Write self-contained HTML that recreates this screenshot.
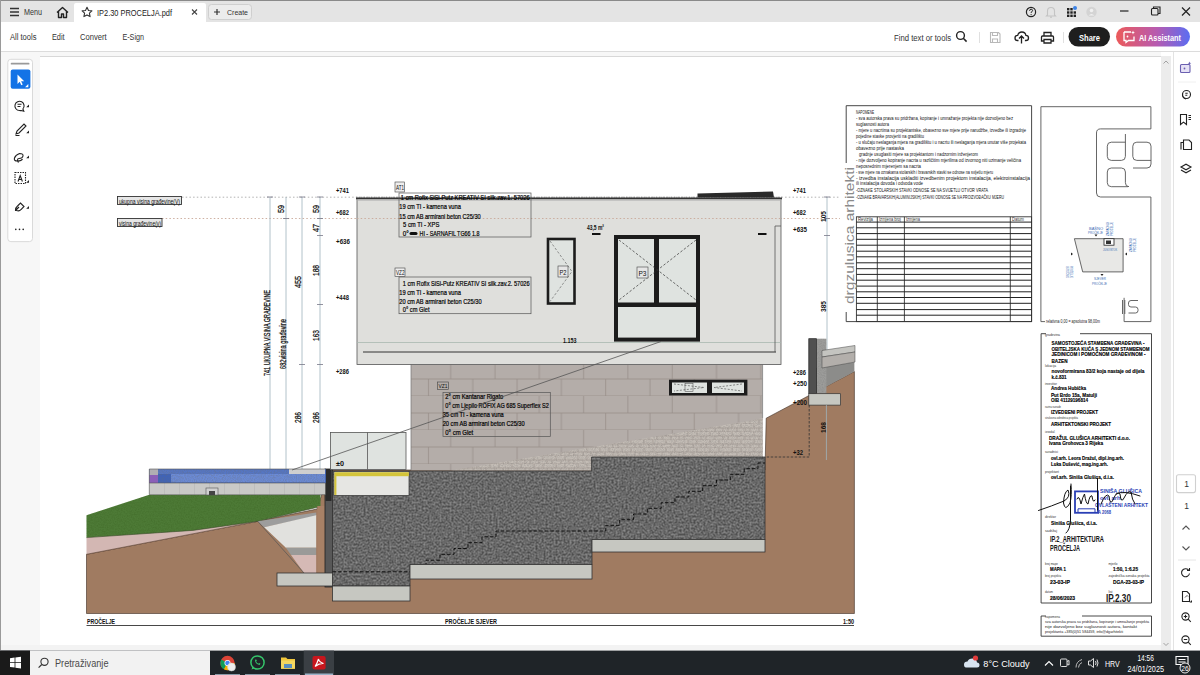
<!DOCTYPE html>
<html><head><meta charset="utf-8">
<style>
*{margin:0;padding:0;box-sizing:border-box}
html,body{width:1200px;height:675px;overflow:hidden;background:#f7f7f7;font-family:"Liberation Sans",sans-serif;color:#222}
.a{position:absolute}
.t{white-space:nowrap;line-height:1}
#tabbar{left:0;top:0;width:1200px;height:22px;background:#e4e4e4;border-top:1px solid #8a8a8a}
#toolbar{left:0;top:22px;width:1200px;height:30px;background:#fff;border-bottom:1px solid #dcdcdc}
#leftborder{left:0;top:0;width:1px;height:650px;background:#9a9a9a}
#page{left:40px;top:56px;width:1121px;height:590px;background:#fff;border-top:1px solid #d8d8d8;border-bottom:1px solid #dcdcdc}
#scroll{left:1161px;top:52px;width:10px;height:598px;background:#ececec}
#rpanel{left:1171px;top:52px;width:29px;height:598px;background:#fff;border-left:1px solid #e2e2e2}
#taskbar{left:0;top:650px;width:1200px;height:25px;background:#202020}
</style></head><body>
<div id="page" class="a"></div>
<div id="scroll" class="a"></div>
<div id="rpanel" class="a"></div>
<svg class="a" style="left:0;top:0" width="1200" height="675" font-family="Liberation Sans">
<defs>
 <filter id="noise" x="0" y="0" width="100%" height="100%" color-interpolation-filters="sRGB">
  <feTurbulence type="fractalNoise" baseFrequency="0.9" numOctaves="2" seed="3" result="n"/>
  <feColorMatrix in="n" type="matrix" values="0 0 0 0 0.42  0 0 0 0 0.42  0 0 0 0 0.42  1.6 0 0 0 -0.55" result="g"/>
  <feComposite in="g" in2="SourceGraphic" operator="in"/>
 </filter>
 <filter id="conc" x="0" y="0" width="100%" height="100%" color-interpolation-filters="sRGB">
  <feTurbulence type="fractalNoise" baseFrequency="0.5" numOctaves="2" seed="11" result="n"/>
  <feColorMatrix in="n" type="matrix" values="0.42 0 0 0 0.2  0.42 0 0 0 0.2  0.42 0 0 0 0.2  0 0 0 0 1" result="g"/>
  <feComposite in="g" in2="SourceGraphic" operator="in"/>
 </filter>
 <filter id="noiseL" x="0" y="0" width="100%" height="100%" color-interpolation-filters="sRGB">
  <feTurbulence type="fractalNoise" baseFrequency="0.7" numOctaves="2" seed="7" result="n"/>
  <feColorMatrix in="n" type="matrix" values="0 0 0 0 0.2  0 0 0 0 0.35  0 0 0 0 0.1  1.2 0 0 0 -0.45" result="g"/>
  <feComposite in="g" in2="SourceGraphic" operator="in"/>
 </filter>
 <pattern id="brick" patternUnits="userSpaceOnUse" x="411" y="362" width="88.6" height="34">
  <rect width="88.6" height="34" fill="#b4ada9"/>
  <path d="M0 17h88.6M0 34h88.6M39.7 0v17M84 0v17M17.5 17v17M61.8 17v17" stroke="#978f8a" stroke-width="0.8"/>
 </pattern>
 <pattern id="stone" patternUnits="userSpaceOnUse" width="22" height="8">
  <rect width="22" height="8" fill="#c4bdb6"/>
  <path d="M0 4h22M0 8h22M6 0v4M15 0v4M2 4v4M11 4v4M19 4v4" stroke="#a39b94" stroke-width="0.7"/>
 </pattern>
 <pattern id="poolstone" patternUnits="userSpaceOnUse" width="15" height="12" x="149" y="483">
  <rect width="15" height="12" fill="#c9c9c7"/>
  <path d="M0 0v12" stroke="#a9a9a7" stroke-width="0.7"/>
 </pattern>
</defs>

<!-- level reference dotted lines -->
<path d="M182 197.2H840" stroke="#a9a9a9" stroke-width="0.9" stroke-dasharray="1.5 2.2"/>
<path d="M162 218.5H840" stroke="#c8a898" stroke-width="0.9" stroke-dasharray="1.5 2.2"/>
<rect x="117.5" y="196.5" width="64" height="8" fill="#e6e6e6" stroke="#333" stroke-width="0.9"/>
<rect x="117.5" y="218.5" width="44.5" height="8" fill="#e6e6e6" stroke="#333" stroke-width="0.9"/>
<text x="119" y="203.6" font-size="6.4" fill="#111" textLength="61" lengthAdjust="spacingAndGlyphs">ukupna visina građevine(V)</text>
<text x="119" y="225.6" font-size="6.4" fill="#111" textLength="42" lengthAdjust="spacingAndGlyphs">visina građevine(v)</text>

<!-- vertical dimension lines -->
<g stroke="#9fb3bd" stroke-width="0.8">
 <path d="M270 197v273M286 197v273M302 197v273M320 197v273"/>
</g>
<g stroke="#778" stroke-width="0.8">
 <path d="M267 197h6M283 218.5h6M299 197h6M299 364.5h6M299 470h6M317 197h6M317 218.5h6M317 235.5h6M317 304.5h6M317 364.5h6M317 470h6"/>
</g>
<g fill="#111" font-size="8.5" font-weight="normal" stroke="#111" stroke-width="0.25">
 <text transform="translate(269.5,376) rotate(-90)" textLength="86" lengthAdjust="spacingAndGlyphs">741 UKUPNA VISINA GRAĐEVINE</text>
 <text transform="translate(285.5,369) rotate(-90)" textLength="50" lengthAdjust="spacingAndGlyphs">682visina građevine</text>
 <text transform="translate(300.5,288) rotate(-90)" textLength="12" lengthAdjust="spacingAndGlyphs">455</text>
 <text transform="translate(284,213) rotate(-90)" textLength="8" lengthAdjust="spacingAndGlyphs">59</text>
 <text transform="translate(318.5,213) rotate(-90)" textLength="8" lengthAdjust="spacingAndGlyphs">59</text>
 <text transform="translate(318.5,232) rotate(-90)" textLength="8" lengthAdjust="spacingAndGlyphs">47</text>
 <text transform="translate(318.5,276) rotate(-90)" textLength="11" lengthAdjust="spacingAndGlyphs">188</text>
 <text transform="translate(318.5,341) rotate(-90)" textLength="11" lengthAdjust="spacingAndGlyphs">163</text>
 <text transform="translate(300.5,423) rotate(-90)" textLength="11" lengthAdjust="spacingAndGlyphs">286</text>
 <text transform="translate(318.5,423) rotate(-90)" textLength="11" lengthAdjust="spacingAndGlyphs">286</text>
</g>


<!-- BROWN GROUND -->
<path d="M86.5 554.3L257.7 521.3L317 509L330 470H765L766.2 418.2L854.4 371.5V613.5H86.5Z" fill="#a07b61" stroke="#3a2a20" stroke-width="0.6"/>
<!-- pink strip -->
<path d="M86.5 537.6L257.7 521.3L86.5 554.3Z" fill="#d3b7b3"/>
<path d="M86.5 554.3L257.7 521.3" stroke="#6d5040" stroke-width="0.7"/>
<!-- grass -->
<path d="M86.5 515.3L149.3 494.7L320.5 494.7V506.6L257.7 521.3L192.7 530.4L86.5 537.6Z" fill="#4d7a36"/>
<path d="M86.5 515.3L149.3 494.7L320.5 494.7V506.6L257.7 521.3L192.7 530.4L86.5 537.6Z" fill="#000" filter="url(#noiseL)" opacity=".5"/>
<path d="M86.5 537.6L192.7 530.4L257.7 521.3L320.5 506.6" stroke="#3b4a2a" stroke-width="0.6" fill="none"/>
<!-- gravel wedge -->
<path d="M257.7 521.3L316.2 512.6V516L264.2 527.2Z" fill="#9d9d9d"/>
<path d="M264.2 527.2L316.2 515.3V547.8H285.9Z" fill="#e1e1de"/>
<path d="M285.9 547.8H316.2V555H291Z" fill="#9a9a98"/>
<path d="M291 555H316.2V573H304Z" fill="#d5b9b5"/>
<path d="M257.7 521.3L304 573" stroke="#555" stroke-width="0.7"/>
<rect x="317.3" y="506" width="7.6" height="67" fill="#a88166"/>
<!-- dark wall -->
<rect x="325" y="469" width="7.5" height="118" fill="#585858" stroke="#222" stroke-width="0.8"/>
<rect x="325.5" y="469" width="6" height="32" fill="#2a2a2a"/>

<!-- pool -->
<rect x="149.3" y="469" width="176.7" height="14" fill="#3f63b8"/>
<rect x="158" y="469" width="167" height="5" fill="#5576c4"/>
<rect x="171" y="474" width="154" height="8.5" fill="#6a8ad6"/>
<rect x="149.3" y="469" width="176.7" height="14" fill="#000" filter="url(#noise)" opacity=".45"/>
<rect x="149.3" y="469" width="8.7" height="14" fill="#b0aeb3"/>
<rect x="149.3" y="475" width="8.7" height="8" fill="#8b5fb8"/>
<rect x="289" y="469" width="36" height="5" fill="#cfcfcf"/>
<rect x="149.3" y="483" width="176" height="11.7" fill="url(#poolstone)"/>
<path d="M149.3 469H326M149.3 483H326M149.3 494.7H326M149.3 469V494.7" stroke="#555" stroke-width="0.6" fill="none"/>
<rect x="206" y="488" width="12" height="7" fill="#d0d0d0" stroke="#555" stroke-width="0.6"/>
<rect x="209" y="491" width="6" height="4" fill="#444"/>

<!-- BRICK WALL -->
<rect x="411" y="364.5" width="351.6" height="106" fill="url(#brick)"/>
<path d="M450.7 470.6L754.6 420L762.6 418V457H591.6V470.6Z" fill="url(#stone)"/>
<path d="M450.7 470.6L754.6 420L762.6 418V457H591.6V470.6Z" fill="#000" filter="url(#noise)" opacity=".35"/>
<path d="M411 364.5V470.6M762.6 364.5V418" stroke="#777" stroke-width="0.7"/>
<!-- P4 -->
<rect x="669" y="379.7" width="78.4" height="15.8" fill="#1c1c1c"/>
<rect x="672" y="382.5" width="35" height="10.5" fill="#dfe3e0"/>
<rect x="712" y="382.5" width="32" height="10.5" fill="#dfe3e0"/>
<path d="M674 384l30 3.5-30 3.5M742 384l-28 3.5 28 3.5" stroke="#444" stroke-width="0.6" stroke-dasharray="2 1.5" fill="none"/>
<rect x="685" y="383.5" width="8" height="8" fill="none" stroke="#444" stroke-width="0.5"/>
<!-- VZ1 -->
<rect x="437.5" y="382" width="11" height="7.5" fill="#b4ada9" stroke="#444" stroke-width="0.6"/>
<text x="438.5" y="388.2" font-size="6" fill="#111" textLength="9" lengthAdjust="spacingAndGlyphs">VZ1</text>
<rect x="443" y="392.4" width="107.3" height="44.2" fill="none" stroke="#555" stroke-width="0.7"/>
<g font-size="7" fill="#000" stroke="#000" stroke-width="0.2">
 <text x="445.3" y="399.4" textLength="58" lengthAdjust="spacingAndGlyphs">2° cm  Kantanar Rigato</text>
 <text x="445.3" y="408.3" textLength="103.5" lengthAdjust="spacingAndGlyphs">0° cm  Ljepilo RÖFIX AG 685 Superflex S2</text>
 <text x="442.7" y="417.1" textLength="61" lengthAdjust="spacingAndGlyphs">35  cm  TI - kamena vuna</text>
 <text x="442.7" y="425.7" textLength="82" lengthAdjust="spacingAndGlyphs">20  cm  AB armirani beton C25/30</text>
 <text x="445.3" y="435.2" textLength="28" lengthAdjust="spacingAndGlyphs">0° cm  Glet</text>
</g>

<!-- CONCRETE -->
<path d="M332.5 471H591.6V457H765V539.5H592V564.5H410V586H332.5Z" fill="#6a6a6a" filter="url(#conc)"/>
<path d="M332.5 471H591.6V457H765V539.5H592V564.5H410V586H332.5Z" fill="none" stroke="#333" stroke-width="0.8"/>
<path d="M332.5 571.8H412V566H426.0V560.2H440.0V554.3H454.0V548.5H468.0V542.7H482.0V536.8H496.0V531.0H592H605.8V525.3H619.7V519.7H633.5V514.0H647.3V508.3H661.2V502.7H675.0V497.0H688.8V491.3H702.7V485.7H716.5V480.0H730.3V474.3H744.2V468.7H758.0V463.0H765" stroke="#111" stroke-width="1" stroke-dasharray="3.5 2" fill="none"/>
<!-- footings -->
<g fill="#c6c7c1" stroke="#333" stroke-width="0.8">
 <rect x="277" y="573" width="55.5" height="13"/>
 <rect x="332.5" y="586" width="77.5" height="15"/>
 <rect x="410" y="564.5" width="182" height="14.5"/>
 <rect x="592" y="539.5" width="173" height="12.5"/>
</g>
<!-- glass railing / terrace -->
<rect x="334" y="471.5" width="75" height="24" fill="#e6e6e3" stroke="#333" stroke-width="0.7"/>
<rect x="334.4" y="472.2" width="74.5" height="4" fill="#d4c43a"/>
<rect x="334.4" y="476" width="2" height="19" fill="#d4c43a"/>
<rect x="330.5" y="432.5" width="75.5" height="37" fill="#dfe3e0" stroke="#555" stroke-width="0.8"/>
<path d="M367.5 432.5v37" stroke="#555" stroke-width="0.8"/>

<!-- UPPER HOUSE -->
<rect x="357" y="198" width="424" height="166.5" fill="#dfdfdc" stroke="#555" stroke-width="0.8"/>
<path d="M356 198.5H782" stroke="#333" stroke-width="1.6"/>
<path d="M357 200H781" stroke="#aaa" stroke-width="1"/>
<path d="M356 197.3H782" stroke="#666" stroke-width="0.8" stroke-dasharray="1.5 1"/>
<path d="M697.5 193.5L773 191.5L774 197.5H697.5Z" fill="#2a2a2a"/>
<path d="M357 342.5H781" stroke="#a8b8b0" stroke-width="0.8"/>
<path d="M363 352H776" stroke="#333" stroke-width="1"/>
<path d="M775 352V226h6" stroke="#555" stroke-width="0.8" fill="none"/>
<path d="M357 218.5H781" stroke="#c8a898" stroke-width="0.9" stroke-dasharray="1.5 2.2"/>
<!-- AT1 -->
<rect x="395" y="182" width="9.6" height="10" fill="#eee" stroke="#444" stroke-width="0.6"/>
<text x="396" y="190" font-size="7" fill="#111" textLength="8" lengthAdjust="spacingAndGlyphs">AT1</text>
<rect x="399" y="193" width="132" height="44" fill="none" stroke="#555" stroke-width="0.7"/>
<g font-size="7" fill="#000" stroke="#000" stroke-width="0.2">
 <text x="400.7" y="199.8" textLength="129" lengthAdjust="spacingAndGlyphs">1  cm  Rofix SiSi-Putz KREATIV SI silk.zav.1.  57026</text>
 <text x="399.3" y="208.7" textLength="61.6" lengthAdjust="spacingAndGlyphs">19  cm  TI - kamena vuna</text>
 <text x="399.3" y="218.5" textLength="81.4" lengthAdjust="spacingAndGlyphs">15  cm  AB armirani beton C25/30</text>
 <text x="403" y="227.4" textLength="36.3" lengthAdjust="spacingAndGlyphs">5  cm  TI - XPS</text>
 <text x="402.8" y="236.3" textLength="6" lengthAdjust="spacingAndGlyphs">0°</text>
 <text x="419.5" y="236.3" textLength="60" lengthAdjust="spacingAndGlyphs">HI - SARNAFIL TG66 1.8</text>
</g>
<rect x="409.5" y="232" width="8" height="3" rx="1.5" fill="#111"/>
<!-- VZ2 -->
<rect x="395" y="268" width="10" height="8.5" fill="#eee" stroke="#444" stroke-width="0.6"/>
<text x="396" y="275.2" font-size="6.5" fill="#111" textLength="8.5" lengthAdjust="spacingAndGlyphs">VZ2</text>
<rect x="399" y="277" width="132" height="36.7" fill="none" stroke="#555" stroke-width="0.7"/>
<g font-size="7" fill="#000" stroke="#000" stroke-width="0.2">
 <text x="402.8" y="285.7" textLength="126.8" lengthAdjust="spacingAndGlyphs">1  cm  Rofix SiSi-Putz KREATIV SI silk.zav.2.  57026</text>
 <text x="399.3" y="295.2" textLength="61.6" lengthAdjust="spacingAndGlyphs">19  cm  TI - kamena vuna</text>
 <text x="399.3" y="303.5" textLength="82.3" lengthAdjust="spacingAndGlyphs">20  cm  AB armirani beton C25/30</text>
 <text x="402.8" y="312.4" textLength="26.7" lengthAdjust="spacingAndGlyphs">0° cm  Glet</text>
</g>
<!-- P2 -->
<rect x="548" y="239" width="26.5" height="64.5" fill="#dfe3e0" stroke="#1c1c1c" stroke-width="2.6"/>
<path d="M550 241L572 271.5L550 301.5" stroke="#555" stroke-width="0.6" stroke-dasharray="2.5 1.8" fill="none"/>
<rect x="558" y="266" width="10" height="11" fill="#e6e6e6" stroke="#444" stroke-width="0.6"/>
<text x="559.5" y="274.5" font-size="7" fill="#111" textLength="7" lengthAdjust="spacingAndGlyphs">P2</text>
<!-- P3 -->
<rect x="616" y="237" width="82" height="102.6" fill="#dfe3e0" stroke="#1c1c1c" stroke-width="4"/>
<rect x="654" y="237" width="5" height="67" fill="#1c1c1c"/>
<rect x="616" y="302.5" width="82" height="4.5" fill="#1c1c1c"/>
<path d="M619 240L696 300M696 240L619 300" stroke="#333" stroke-width="0.7" stroke-dasharray="2.5 1.8" fill="none"/>
<rect x="637" y="267" width="11" height="11" fill="#e6e6e6" stroke="#444" stroke-width="0.6"/>
<text x="638.5" y="275.5" font-size="7" fill="#111" textLength="8" lengthAdjust="spacingAndGlyphs">P3</text>
<text x="587" y="230" font-size="7.5" font-weight="bold" fill="#111" textLength="17" lengthAdjust="spacingAndGlyphs">43,5 m²</text>
<rect x="592" y="233" width="8.5" height="2" fill="#111"/>
<rect x="758" y="233" width="8.5" height="2" fill="#111"/>
<text x="563" y="343" font-size="7.5" font-weight="bold" fill="#111" textLength="13.5" lengthAdjust="spacingAndGlyphs">1.153</text>
<!-- long diagonal line -->
<path d="M292 470L661 341.5" stroke="#555" stroke-width="0.8"/>

<!-- RIGHT DIMENSIONS -->
<path d="M827 197v165" stroke="#9fb3bd" stroke-width="0.8"/>
<path d="M824 197h6M824 218.5h6M824 235.5h6" stroke="#778" stroke-width="0.8"/>
<g fill="#111" font-size="7.5" font-weight="bold">
 <text x="793" y="193" textLength="13" lengthAdjust="spacingAndGlyphs">+741</text>
 <text x="793" y="215" textLength="13" lengthAdjust="spacingAndGlyphs">+682</text>
 <text x="793" y="232" textLength="14" lengthAdjust="spacingAndGlyphs">+635</text>
 <text x="793" y="375" textLength="13" lengthAdjust="spacingAndGlyphs">+286</text>
 <text x="793" y="386" textLength="14" lengthAdjust="spacingAndGlyphs">+250</text>
 <text x="793" y="405" textLength="14" lengthAdjust="spacingAndGlyphs">+200</text>
 <text x="793" y="454.5" textLength="10" lengthAdjust="spacingAndGlyphs">+32</text>
</g>
<g fill="#111" font-size="7" font-weight="bold">
 <text transform="translate(826,222) rotate(-90)" textLength="11" lengthAdjust="spacingAndGlyphs">105</text>
 <text transform="translate(826,312) rotate(-90)" textLength="11" lengthAdjust="spacingAndGlyphs">385</text>
 <text transform="translate(826,433) rotate(-90)" textLength="11" lengthAdjust="spacingAndGlyphs">168</text>
</g>
<!-- right retaining structure -->
<path d="M816 368L854.4 362V371.5L816 392Z" fill="#8c8c8a"/>
<rect x="816.4" y="338.7" width="10" height="55" fill="#9c9c9a"/>
<rect x="816.4" y="338.7" width="10" height="55" fill="#000" filter="url(#noise)" opacity=".3"/>
<path d="M822 350.5L855 345.5V352L822 357Z" fill="#c4c4c0" stroke="#444" stroke-width="0.5"/>
<path d="M822 357L855 352V362L822 368Z" fill="#b3afab" stroke="#444" stroke-width="0.5"/>
<rect x="808.8" y="338.7" width="7.6" height="55" fill="#505050" stroke="#222" stroke-width="0.7"/>
<rect x="808.8" y="393.7" width="31.7" height="11.4" fill="#c6c7c1" stroke="#333" stroke-width="0.7"/>
<path d="M809.2 405V457H765" stroke="#333" stroke-width="0.8" stroke-dasharray="2.5 1.5" fill="none"/>
<path d="M826.4 405V460" stroke="#9fb3bd" stroke-width="0.8"/>
<!-- captions -->
<path d="M86.5 625.5H854" stroke="#333" stroke-width="0.9"/>
<g fill="#111" font-size="7" font-weight="bold">
 <text x="87" y="623.5" textLength="28" lengthAdjust="spacingAndGlyphs">PROČELJE</text>
 <text x="445" y="623.5" textLength="52" lengthAdjust="spacingAndGlyphs">PROČELJE SJEVER</text>
 <text x="843" y="623.5" textLength="11" lengthAdjust="spacingAndGlyphs">1:50</text>
</g>
<g fill="#111" font-size="7.5" font-weight="bold">
 <text x="336" y="193" textLength="13" lengthAdjust="spacingAndGlyphs">+741</text>
 <text x="336" y="215" textLength="13" lengthAdjust="spacingAndGlyphs">+682</text>
 <text x="336" y="244" textLength="14" lengthAdjust="spacingAndGlyphs">+636</text>
 <text x="336" y="300" textLength="13" lengthAdjust="spacingAndGlyphs">+448</text>
 <text x="336" y="374" textLength="13" lengthAdjust="spacingAndGlyphs">+286</text>
 <text x="336" y="466" textLength="8" lengthAdjust="spacingAndGlyphs">±0</text>
</g>
</svg>
<svg class="a" style="left:0;top:0" width="1200" height="675" font-family="Liberation Sans">
<!-- NOTES BOX -->
<g stroke="#333" stroke-width="0.9" fill="none">
 <path d="M846.2 163V105.7H1031.6V321.6H846.2V312"/>
 <rect x="856.4" y="216.8" width="175.2" height="104.8"/>
 <path d="M877.3 216.8V321.6M904.4 216.8V321.6M1010.3 216.8V321.6"/>
</g>
<g stroke="#222" stroke-width="1">
 <path d="M856.4 222.1H1031.6M856.4 227.8H1031.6M856.4 233.6H1031.6M856.4 239.3H1031.6M856.4 245.2H1031.6M856.4 251.2H1031.6M856.4 256.8H1031.6M856.4 262.8H1031.6M856.4 268.7H1031.6M856.4 274.4H1031.6M856.4 280.2H1031.6M856.4 286.1H1031.6M856.4 291.8H1031.6M856.4 297.5H1031.6M856.4 303.3H1031.6M856.4 309.6H1031.6M856.4 315.2H1031.6"/>
</g>
<g font-size="5" fill="#333">
 <text x="858" y="221" textLength="15" lengthAdjust="spacingAndGlyphs">Revizija</text>
 <text x="879" y="221" textLength="22" lengthAdjust="spacingAndGlyphs">Izmjena broj</text>
 <text x="906" y="221" textLength="14" lengthAdjust="spacingAndGlyphs">Izmjena</text>
 <text x="1012" y="221" textLength="12" lengthAdjust="spacingAndGlyphs">Datum</text>
</g>
<text transform="translate(853.5,304) rotate(-90) scale(1,1.25)" font-size="10" fill="#8a8a8a" textLength="137" lengthAdjust="spacingAndGlyphs">drgzulusica arhitekti</text>
<g font-size="4.6" fill="#111">
 <text x="856" y="114" textLength="18" lengthAdjust="spacingAndGlyphs">NAPOMENE</text>
 <text x="856" y="120" textLength="157" lengthAdjust="spacingAndGlyphs">- sva autorska prava su pridržana, kopiranje i umnažanje projekta nije dozvoljeno bez</text>
 <text x="856" y="125.8" textLength="33" lengthAdjust="spacingAndGlyphs">suglasnosti autora</text>
 <text x="856" y="132" textLength="170" lengthAdjust="spacingAndGlyphs">- mjere u nacrtima su projektantske, obavezno sve mjere prije narudžbe, izvedbe ili izgradnje</text>
 <text x="856" y="137.8" textLength="68" lengthAdjust="spacingAndGlyphs">pojedine stavke provjeriti na gradilištu</text>
 <text x="856" y="144" textLength="170" lengthAdjust="spacingAndGlyphs">- u slučaju neslaganja mjera na gradilištu i u nacrtu ili neslaganja mjera unutar više projekata</text>
 <text x="856" y="149.8" textLength="48" lengthAdjust="spacingAndGlyphs">obavezno prije nastavka</text>
 <text x="859" y="155.6" textLength="119" lengthAdjust="spacingAndGlyphs">gradnje usuglasiti mjere sa projektantom i nadzornim inženjerom</text>
 <text x="856" y="161.5" textLength="165" lengthAdjust="spacingAndGlyphs">- nije dozvoljeno kopiranje nacrta u različitim mjerilima od izvornog niti uzimanje veličina</text>
 <text x="856" y="167.5" textLength="65" lengthAdjust="spacingAndGlyphs">neposrednim mjerenjem sa nacrta</text>
 <text x="856" y="173.5" textLength="137" lengthAdjust="spacingAndGlyphs">- sve mjere na oznakama stolarskih i bravarskih stavki se odnose na svijetlu mjeru</text>
 <text x="856" y="179.5" textLength="174" lengthAdjust="spacingAndGlyphs">- izvedba instalacija uskladiti izvedbenim projektom instalacija, elektroinstalacija</text>
 <text x="856" y="185.3" textLength="67" lengthAdjust="spacingAndGlyphs">ili instalacija dovoda i odvoda vode</text>
 <text x="856" y="192" textLength="132" lengthAdjust="spacingAndGlyphs">-OZNAKE STOLARSKIH STAVKI ODNOSE SE NA SVIJETLU OTVOR VRATA</text>
 <text x="856" y="199" textLength="148" lengthAdjust="spacingAndGlyphs">-OZNAKE BRAVARSKIH(ALUMINIJSKIH) STAVKI ODNOSE SE NA PROIZVOĐAČKU MJERU</text>
</g>

<!-- LOGO BOX -->
<g stroke="#555" stroke-width="0.9" fill="none">
 <path d="M1040.9 321.6V106.7H1150.9V128.9H1100.5Q1096.5 128.9 1096.5 133V193Q1096.5 197 1100.5 197H1150.9V321.6H1124.1V297.8"/>
 <path d="M1040.9 321.6H1045"/>
 <!-- d -->
 <path d="M1125.4 134V156.4Q1125.4 160.4 1121.4 160.4H1111.3Q1107.3 160.4 1107.3 156.4V146.2Q1107.3 142.2 1111.3 142.2H1125.4"/>
 <!-- g -->
 <path d="M1151 160.4H1136.8Q1132.8 160.4 1132.8 156.4V146.2Q1132.8 142.2 1136.8 142.2H1147Q1151 142.2 1151 146.2V164Q1151 168 1147 168H1133"/>
 <!-- a -->
 <path d="M1128 186.7H1111.3Q1107.3 186.7 1107.3 182.7V172Q1107.3 168 1111.3 168H1121.4Q1125.4 168 1125.4 172V182.7Q1125.4 186.7 1129 186.7"/>
 <!-- S mark -->
 <path d="M1122.5 300V314M1124.8 300V314"/>
 <path d="M1138 300.5H1131Q1128.5 300.5 1128.5 303V304.5Q1128.5 307 1131 307H1135.5Q1138 307 1138 309.5V310.5Q1138 313 1135.5 313H1128.5"/>
</g>
<text x="1046" y="322.5" font-size="4.6" fill="#222" textLength="54" lengthAdjust="spacingAndGlyphs">relativna 0,00 = apsolutna 98,00m</text>
<!-- site plan -->
<path d="M1074.4 238.7H1123.1V271.9H1082.7Z" fill="#e8e8e6" stroke="#444" stroke-width="0.8"/>
<rect x="1104" y="238.7" width="10" height="6.5" fill="#fff" stroke="#222" stroke-width="0.8"/>
<rect x="1106" y="240.5" width="5" height="3.5" fill="#333"/>
<g fill="#3b6cb3" font-size="4">
 <text x="1089" y="229.5" textLength="14" lengthAdjust="spacingAndGlyphs">BAŠNO</text>
 <text x="1088" y="234" textLength="15" lengthAdjust="spacingAndGlyphs">PROČELJE</text>
 <text x="1103" y="251" textLength="14" lengthAdjust="spacingAndGlyphs">JUGOISTOK</text>
 <text transform="translate(1109,236) rotate(-90)" textLength="14" lengthAdjust="spacingAndGlyphs">ZAPADNO</text>
 <text transform="translate(1113,236) rotate(-90)" textLength="14" lengthAdjust="spacingAndGlyphs">PROČELJE</text>
 <text transform="translate(1066,266) rotate(90)" textLength="12" lengthAdjust="spacingAndGlyphs">ISTOČNO</text>
 <text transform="translate(1070,266) rotate(90)" textLength="12" lengthAdjust="spacingAndGlyphs">PROČELJE</text>
 <text transform="translate(1132,252) rotate(-90)" textLength="14" lengthAdjust="spacingAndGlyphs">ZAPADNO</text>
 <text transform="translate(1136,252) rotate(-90)" textLength="14" lengthAdjust="spacingAndGlyphs">PROČELJE</text>
 <text x="1094" y="280" textLength="12" lengthAdjust="spacingAndGlyphs">SJEVER</text>
 <text x="1092" y="284.5" textLength="15" lengthAdjust="spacingAndGlyphs">PROČELJE</text>
</g>
<g fill="#222"><path d="M1094.5 234.5h3l-1.5 2z M1102 276l-1.5-2h3z M1071 255.5v-3l2 1.5z M1127 252.5v3l-2-1.5z"/></g>

<!-- TITLE BLOCK -->
<g stroke="#333" stroke-width="0.9" fill="none">
 <path d="M1046 333.7H1041.1V603H1151.5V333.7H1080"/>
 <path d="M1041.1 616H1046M1082 616H1151.5V636.2H1041.1V616"/>
</g>
<g font-size="4.3" fill="#333">
 <text x="1045" y="335.5" textLength="15" lengthAdjust="spacingAndGlyphs">građevina</text>
 <text x="1045" y="366.5" textLength="11" lengthAdjust="spacingAndGlyphs">lokacija</text>
 <text x="1045" y="384.5" textLength="12" lengthAdjust="spacingAndGlyphs">investitor</text>
 <text x="1045" y="408" textLength="16" lengthAdjust="spacingAndGlyphs">razina razrade</text>
 <text x="1045" y="419.3" textLength="33" lengthAdjust="spacingAndGlyphs">strukovna odrednica projekta</text>
 <text x="1045" y="433" textLength="10" lengthAdjust="spacingAndGlyphs">izvođač</text>
 <text x="1045" y="452.5" textLength="13" lengthAdjust="spacingAndGlyphs">suradnici</text>
 <text x="1045" y="472.5" textLength="14" lengthAdjust="spacingAndGlyphs">projektant</text>
 <text x="1045" y="518" textLength="11" lengthAdjust="spacingAndGlyphs">direktor</text>
 <text x="1045" y="532" textLength="12" lengthAdjust="spacingAndGlyphs">sadržaj</text>
 <text x="1045" y="564.5" textLength="13" lengthAdjust="spacingAndGlyphs">broj mape</text>
 <text x="1108.5" y="564.5" textLength="9" lengthAdjust="spacingAndGlyphs">mjerilo</text>
 <text x="1045" y="577" textLength="16" lengthAdjust="spacingAndGlyphs">broj projekta</text>
 <text x="1108.5" y="577" textLength="41" lengthAdjust="spacingAndGlyphs">zajednička oznaka projekta</text>
 <text x="1045" y="592.5" textLength="8" lengthAdjust="spacingAndGlyphs">datum</text>
 <text x="1108.5" y="592.5" textLength="4" lengthAdjust="spacingAndGlyphs">list</text>
 <text x="1045" y="617.5" textLength="15" lengthAdjust="spacingAndGlyphs">napomena</text>
</g>
<g font-size="6" font-weight="bold" fill="#000" stroke="#000" stroke-width="0.15">
 <text x="1051.5" y="344.8" textLength="93" lengthAdjust="spacingAndGlyphs">SAMOSTOJEĆA STAMBENA GRAĐEVINA -</text>
 <text x="1051.5" y="350.8" textLength="98" lengthAdjust="spacingAndGlyphs">OBITELJSKA KUĆA S JEDNOM STAMBENOM</text>
 <text x="1051.5" y="356.4" textLength="94" lengthAdjust="spacingAndGlyphs">JEDINICOM I POMOĆNOM GRAĐEVINOM -</text>
 <text x="1051.5" y="362.8" textLength="16" lengthAdjust="spacingAndGlyphs">BAZEN</text>
 <text x="1051.5" y="373.2" textLength="93" lengthAdjust="spacingAndGlyphs">novoformirana 83/2  koja nastaje od dijela</text>
 <text x="1051.5" y="378.8" textLength="15" lengthAdjust="spacingAndGlyphs">k.č.831</text>
 <text x="1051" y="390.2" textLength="35" lengthAdjust="spacingAndGlyphs">Andrea Hubička</text>
 <text x="1051" y="396.6" textLength="46" lengthAdjust="spacingAndGlyphs">Put Brdo 15a, Matulji</text>
 <text x="1051" y="402.2" textLength="37" lengthAdjust="spacingAndGlyphs">OIB 41129196814</text>
 <text x="1051" y="414" textLength="47" lengthAdjust="spacingAndGlyphs">IZVEDBENI PROJEKT</text>
 <text x="1051" y="425.5" textLength="60" lengthAdjust="spacingAndGlyphs">ARHITEKTONSKI PROJEKT</text>
 <text x="1049" y="439.7" textLength="81" lengthAdjust="spacingAndGlyphs">DRAŽUL GLUŠICA ARHITEKTI d.o.o.</text>
 <text x="1049" y="444.8" textLength="54" lengthAdjust="spacingAndGlyphs">Ivana Grohovca 3 Rijeka</text>
 <text x="1051" y="459.7" textLength="73" lengthAdjust="spacingAndGlyphs">ovl.arh. Leora Dražul, dipl.ing.arh.</text>
 <text x="1051" y="465.5" textLength="57" lengthAdjust="spacingAndGlyphs">Luka Dušević, mag.ing.arh.</text>
 <text x="1051" y="479.2" textLength="63" lengthAdjust="spacingAndGlyphs">ovl.arh. Siniša Glušica, d.i.a.</text>
 <text x="1051" y="525" textLength="46" lengthAdjust="spacingAndGlyphs">Siniša Glušica, d.i.a.</text>
 <text x="1050" y="571.2" textLength="16" lengthAdjust="spacingAndGlyphs">MAPA 1</text>
 <text x="1113" y="571.2" textLength="25" lengthAdjust="spacingAndGlyphs">1:50, 1:6.25</text>
 <text x="1050" y="583.8" textLength="20" lengthAdjust="spacingAndGlyphs">23-03-IP</text>
 <text x="1113" y="583.8" textLength="31" lengthAdjust="spacingAndGlyphs">DGA-23-03-IP</text>
 <text x="1050" y="600.2" textLength="25" lengthAdjust="spacingAndGlyphs">28/06/2023</text>
</g>
<g font-weight="bold" fill="#1a1a1a">
 <text x="1050" y="542.3" font-size="8.5" textLength="54" lengthAdjust="spacingAndGlyphs">IP.2_ARHITEKTURA</text>
 <text x="1050" y="551.3" font-size="8.5" textLength="30" lengthAdjust="spacingAndGlyphs">PROČELJA</text>
 <text x="1106" y="601.5" font-size="10" textLength="25" lengthAdjust="spacingAndGlyphs">IP.2.30</text>
</g>
<g font-size="4.4" fill="#222">
 <text x="1045" y="622.5" textLength="104" lengthAdjust="spacingAndGlyphs">sva autorska prava su pridržana, kopiranje i umnažanje projekta</text>
 <text x="1045" y="627.5" textLength="92" lengthAdjust="spacingAndGlyphs">nije dozvoljeno bez suglasnosti autora, kontakt</text>
 <text x="1045" y="632.5" textLength="78" lengthAdjust="spacingAndGlyphs">projektanta +385(0)51 584459, info@dgarhitekti</text>
</g>
<!-- stamp & signature -->
<rect x="1075" y="491.4" width="23" height="21.4" fill="none" stroke="#2a3fb5" stroke-width="1.8"/>
<path d="M1078 512.8v-4h17v4" stroke="#2a3fb5" stroke-width="1" fill="none"/>
<g fill="#2a3fb5" font-weight="bold" font-size="5.5">
 <text x="1100" y="493" textLength="42" lengthAdjust="spacingAndGlyphs">SINIŠA GLUŠICA</text>
 <text x="1100" y="500" textLength="22" lengthAdjust="spacingAndGlyphs">ovl. arh.</text>
 <text x="1095" y="507" textLength="53" lengthAdjust="spacingAndGlyphs">OVLAŠTENI ARHITEKT</text>
 <text x="1098" y="513.5" textLength="13" lengthAdjust="spacingAndGlyphs">A 2068</text>
</g>
<g stroke="#111" stroke-width="1" fill="none" stroke-linecap="round">
 <path d="M1038.5 510.5Q1052 506 1064 501Q1071 497 1068 490Q1064 492 1063.5 503Q1065 512 1070 503Q1072 496 1071 484"/>
 <path d="M1070.5 486V520Q1070 530 1066 533"/>
 <path d="M1077 499Q1079 494 1081 504Q1083 496 1084.5 494Q1086 504 1088 504Q1090 494 1092 496Q1093 504 1095 500"/>
 <path d="M1097.5 478V510"/>
 <path d="M1101 504Q1106 492 1109 496Q1110 506 1113 500Q1117 490 1120 494Q1121 504 1124 498Q1128 490 1131 492Q1132 500 1135 504"/>
 <path d="M1116 494Q1124 490 1140 496"/>
</g>
</svg>
<!-- LEFT TOOL PANEL -->
<svg class="a" style="left:0;top:52px" width="40" height="200">
 <rect x="7.8" y="7.3" width="24.7" height="182.3" rx="3" fill="#fff" stroke="#d6d6d6" stroke-width="0.9"/>
 <rect x="10.7" y="10.8" width="18.8" height="1.8" rx=".9" fill="#9a9a9a"/>
 <rect x="10.7" y="17.6" width="19.7" height="19.2" rx="2" fill="#1473e6"/>
 <path d="M17.5 22.5v9.5l2.2-2.2 1.6 3.4 1.4-.7-1.6-3.3h3.1z" fill="#fff"/>
 <path d="M28.3 35.3v-3.2l-3.2 3.2z" fill="#fff"/>
 <g stroke="#222" stroke-width="1.1" fill="none">
  <path d="M19.5 58.5a4.6 4.6 0 1 1 3.4-1.5l.9 2.2-2.6-.7a4.6 4.6 0 0 1-1.7 0z"/>
  <path d="M17.5 52.2h4M17.5 54.5h3"/>
  <path d="M16 82l1-3 7-7 2 2-7 7z M15.5 83.5h4"/>
  <path d="M22.5 107q-1 2-5 2t-3-3 5-4.5q4 0 3.5 2.5t-4 2.5q-1.5 0-1.5 1.5t1 2.5"/>
  <rect x="15" y="120.5" width="10.5" height="11" stroke-dasharray="1.5 1"/>
  <path d="M18 129.5l2.2-6 2.2 6M18.8 127.5h2.8"/>
  <path d="M15.5 158.5q0-3 2-4.5l3-3 3.5 3.5-3 3q-1.5 2-4.5 1z M15.5 158.5l3.5-3.5"/>
 </g>
 <g fill="#222">
  <path d="M29 52.5v2.8h-2.8z M29 78.5v2.8h-2.8z M29 103.5v2.8h-2.8z M29 128v2.8h-2.8z M29 154v2.8h-2.8z"/>
  <circle cx="15.8" cy="177.4" r=".8"/><circle cx="19.5" cy="177.4" r=".8"/><circle cx="23.2" cy="177.4" r=".8"/>
 </g>
</svg>

<!-- RIGHT PANEL -->
<svg class="a" style="left:1160px;top:52px" width="40" height="598">
 <rect x="1" y="0" width="10" height="598" fill="#ececec"/>
 <rect x="1" y="0" width="10" height="4" fill="#fff"/>
 <path d="M3.5 11.5l2.5-2.5 2.5 2.5" stroke="#9a9a9a" stroke-width=".9" fill="none"/>
 <path d="M3.5 591l2.5 2.5 2.5-2.5" stroke="#9a9a9a" stroke-width=".9" fill="none"/>
 <rect x="11" y="0" width="29" height="598" fill="#fff"/>
 <path d="M13.5 0v598" stroke="#e3e3e3"/>
 <!-- AI icon -->
 <rect x="20.5" y="12.5" width="9.5" height="8" rx="1" stroke="#6a5fb0" stroke-width="1.1" fill="#e6e2f5"/>
 <path d="M29.5 9.5l.5 1.3 1.3.5-1.3.5-.5 1.3-.5-1.3-1.3-.5 1.3-.5z" fill="#6a5fb0"/>
 <circle cx="24.5" cy="16.5" r=".9" fill="#6a5fb0"/>
 <path d="M18 30h18" stroke="#f0f0f0"/>
 <g stroke="#222" stroke-width="1.1" fill="none">
  <circle cx="26.5" cy="42.5" r="4"/>
  <path d="M22.7 41.5a4 4 0 0 0 3.3 5.4"/>
  <path d="M25.3 41.3h2.4M25.3 43.3h2"/>
  <path d="M20.5 62.5h6v10l-3-2.4-3 2.4z"/>
  <path d="M28.5 63.5h2.5M28.5 65.5h2.5M28.5 67.5h2.5"/>
  <path d="M23.5 88h5.5l2.5 2.5v7h-8z"/>
  <path d="M23.5 90.5h-2.5v7"/>
  <path d="M21 115l5-2.8 5 2.8-5 2.8z"/>
  <path d="M21 118l5 2.8 5-2.8"/>
  <!-- bottom controls -->
  <rect x="16.5" y="422.8" width="19" height="17.8" rx="2" stroke="#d0d0d0"/>
  <path d="M22.5 477.5l3.5-3.5 3.5 3.5M22.5 494.5l3.5 3.5 3.5-3.5" stroke="#555"/>
  <path d="M29.5 521.5a4 4 0 1 1-1-3.5 M29.5 516v2.5h-2.5"/>
  <path d="M22.5 539.5h4.5l2.5 2.5v7.5h-7z"/>
  <circle cx="25.5" cy="564.5" r="3.6"/><path d="M28.2 567.2l2.6 2.6M23.8 564.5h3.4M25.5 562.8v3.4"/>
  <circle cx="25.5" cy="587.5" r="3.6"/><path d="M28.2 590.2l2.6 2.6M23.8 587.5h3.4"/>
 </g>
 <path d="M25 545.5l2-2 1 1" stroke="#222" stroke-width=".8" fill="none"/>
 <path d="M32 548v2.5h-2.5z" fill="#222"/>
 <path d="M18 508h18" stroke="#e6e6e6"/>
</svg>
<svg class="a" style="left:1160px;top:52px" width="40" height="598" font-family="Liberation Sans">
 <text x="24.3" y="434.8" font-size="8.5" fill="#333">1</text>
 <text x="24.3" y="456.5" font-size="8.5" fill="#333">1</text>
</svg>
<!-- TAB BAR -->
<div id="tabbar" class="a"></div>
<svg class="a" style="left:0;top:0" width="1200" height="52">
 <g stroke="#333" stroke-width="1.3" fill="none">
  <path d="M10 8.5h9M10 12h9M10 15.5h9"/>
 </g>
 <path d="M57 12.5l5.5-5 5.5 5M58.5 11v6.5h3v-3.5h2v3.5h3V11" stroke="#222" stroke-width="1.4" fill="none" stroke-linejoin="round"/>
 <path d="M74 22V5q0-2 2-2h128q2 0 2 2v17z" fill="#fff"/>
 <path d="M87 7.3l1.5 3.2 3.4.4-2.5 2.3.7 3.4-3.1-1.7-3.1 1.7.7-3.4-2.5-2.3 3.4-.4z" stroke="#333" stroke-width="1.1" fill="none" stroke-linejoin="round"/>
 <path d="M192 9.5l5 5M197 9.5l-5 5" stroke="#444" stroke-width="1.1"/>
 <rect x="208.5" y="4.5" width="43" height="15" rx="3" fill="#ececec" stroke="#cfcfcf"/>
 <path d="M214 12h6M217 9v6" stroke="#333" stroke-width="1.2"/>
 <circle cx="1031" cy="12" r="4.6" stroke="#222" stroke-width="1.2" fill="none"/>
 <path d="M1029.6 10.8q0-1.6 1.5-1.6t1.5 1.4q0 .9-1.4 1.5v.8" stroke="#222" stroke-width="1" fill="none"/>
 <circle cx="1031.1" cy="14.6" r=".6" fill="#222"/>
 <path d="M1047.5 15v-4q0-3.5 3.5-3.5t3.5 3.5v4l1 1h-9z M1050 17.2h2" stroke="#c4c4c4" stroke-width="1.1" fill="none"/>
 <g fill="#222"><rect x="1067" y="8" width="2.4" height="2.4"/><rect x="1070.3" y="8" width="2.4" height="2.4"/><rect x="1067" y="11.3" width="2.4" height="2.4"/><rect x="1070.3" y="11.3" width="2.4" height="2.4"/><rect x="1073.6" y="11.3" width="2.4" height="2.4"/><rect x="1067" y="14.6" width="2.4" height="2.4"/><rect x="1070.3" y="14.6" width="2.4" height="2.4"/><rect x="1073.6" y="14.6" width="2.4" height="2.4"/></g>
 <circle cx="1075" cy="8" r="2" fill="#3b82e6"/>
 <circle cx="1091.5" cy="12" r="5.2" fill="#d4d4d4"/>
 <circle cx="1091.5" cy="10.5" r="1.8" fill="#f0f0f0"/><path d="M1088.5 15.5q3-3.2 6 0" fill="#f0f0f0"/>
 <path d="M1120 11h8.5" stroke="#222" stroke-width="1.2"/>
 <rect x="1151.5" y="8.5" width="6.5" height="6.5" rx="1" stroke="#222" stroke-width="1.1" fill="none"/>
 <path d="M1153.5 8.5v-1.5h6.5v6.5h-2" stroke="#222" stroke-width="1.1" fill="none"/>
 <path d="M1182 7.5l8 8M1190 7.5l-8 8" stroke="#222" stroke-width="1.2"/>
</svg>
<!-- TOOLBAR -->
<div id="toolbar" class="a"></div>
<svg class="a" style="left:0;top:22px" width="1200" height="30">
 <circle cx="960.5" cy="13.5" r="3.9" stroke="#222" stroke-width="1.4" fill="none"/>
 <path d="M963.3 16.3l3.3 3.3" stroke="#222" stroke-width="1.5"/>
 <path d="M979.5 10v11M1063.5 10v11" stroke="#e0e0e0"/>
 <path d="M990.5 10.5h8l1.5 1.5v8.5h-9.5z M992.5 10.5v3h5v-3 M992.5 20.5v-3.5h5v3.5" stroke="#b8b8b8" stroke-width="1.1" fill="none"/>
 <path d="M1018.5 18.5h-1q-2.5 0-2.5-2.6t2.7-2.6q.8-3.3 4.2-3.3t4 3.3q2.6 0 2.6 2.6t-2.6 2.6h-1 M1021.5 21.5v-7 M1019 16.5l2.5-2.5 2.5 2.5" stroke="#222" stroke-width="1.3" fill="none"/>
 <path d="M1044 14h-1.5q-1 0-1 1v4h2.5 M1051 19h2.5v-4q0-1-1-1H1044 M1044 14v-3.5h7V14 M1044 17.5h7v3.5h-7z" stroke="#222" stroke-width="1.3" fill="none"/>
 <rect x="1068.5" y="5" width="41.5" height="19.5" rx="9.75" fill="#1e1e1e"/>
 <defs><linearGradient id="aig" x1="0" x2="1"><stop offset="0" stop-color="#ec5a5a"/><stop offset=".55" stop-color="#b75bb0"/><stop offset="1" stop-color="#5b6df2"/></linearGradient></defs>
 <rect x="1116" y="5" width="74" height="19.5" rx="9.75" fill="url(#aig)"/>
 <path d="M1124 10h7M1124 10v8.5h2v2l2.5-2h5.5v-4" stroke="#fff" stroke-width="1.3" fill="none"/>
 <path d="M1133 8.5l.6 1.4 1.4.6-1.4.6-.6 1.4-.6-1.4-1.4-.6 1.4-.6z" fill="#fff"/>
 <circle cx="1127.5" cy="14.5" r=".9" fill="#fff"/>
</svg>

<svg class="a" style="left:0;top:0" width="1200" height="52" font-family="Liberation Sans">
 <text x="24" y="15" font-size="8.5" fill="#333" textLength="18" lengthAdjust="spacingAndGlyphs">Menu</text>
 <text x="97" y="15.5" font-size="9" fill="#222" textLength="75" lengthAdjust="spacingAndGlyphs">IP2.30 PROCELJA.pdf</text>
 <text x="227" y="15" font-size="8" fill="#333" textLength="21" lengthAdjust="spacingAndGlyphs">Create</text>
 <text x="10" y="40" font-size="8.5" fill="#333" textLength="26.5" lengthAdjust="spacingAndGlyphs">All tools</text>
 <text x="52" y="40" font-size="8.5" fill="#333" textLength="12.6" lengthAdjust="spacingAndGlyphs">Edit</text>
 <text x="80" y="40" font-size="8.5" fill="#333" textLength="26.7" lengthAdjust="spacingAndGlyphs">Convert</text>
 <text x="122.4" y="40" font-size="8.5" fill="#333" textLength="21.6" lengthAdjust="spacingAndGlyphs">E-Sign</text>
 <text x="894" y="40.5" font-size="8.5" fill="#333" textLength="57" lengthAdjust="spacingAndGlyphs">Find text or tools</text>
 <text x="1079" y="40.5" font-size="8.5" font-weight="bold" fill="#fff" textLength="21" lengthAdjust="spacingAndGlyphs">Share</text>
 <text x="1139" y="40.5" font-size="8.5" font-weight="bold" fill="#fff" textLength="42" lengthAdjust="spacingAndGlyphs">AI Assistant</text>
</svg>
<svg class="a" style="left:0;top:645px" width="1200" height="30" font-family="Liberation Sans">
 <rect x="0" y="0" width="1161" height="5.6" fill="#f3f3f3"/>
 <rect x="0" y="5.6" width="1200" height="24.4" fill="#1f2428"/>
 <rect x="0" y="5.6" width="30" height="24.4" fill="#1a1a1a"/>
 <rect x="30" y="5.6" width="180" height="24.4" fill="#f2f2f2"/>
 <g fill="#fff"><path d="M10 13.3l4.6-.7v4.6H10z M15.4 12.5l5.6-.8v5.5h-5.6z M10 18h4.6v4.6l-4.6-.6z M15.4 18H21v5.6l-5.6-.8z"/></g>
 <circle cx="44.5" cy="16.8" r="3.6" stroke="#333" stroke-width="1.1" fill="none"/>
 <path d="M41.8 19.5l-3.2 3.2" stroke="#333" stroke-width="1.2"/>
 <text x="55" y="21.8" font-size="10" fill="#4a4a4a" textLength="53.5" lengthAdjust="spacingAndGlyphs">Pretraživanje</text>
 <rect x="303.7" y="5.6" width="30.3" height="24.4" fill="#3a3f44"/>
 <!-- chrome -->
 <circle cx="227.5" cy="18" r="7.2" fill="#db4437"/>
 <path d="M227.5 18L221.3 14.4A7.2 7.2 0 0 0 224 24.3Z" fill="#0f9d58"/>
 <path d="M227.5 18L224 24.3A7.2 7.2 0 0 0 234.7 18Z" fill="#f4b400"/>
 <circle cx="227.5" cy="18" r="3" fill="#fff"/><circle cx="227.5" cy="18" r="2.3" fill="#4285f4"/>
 <circle cx="231.5" cy="22" r="4" fill="#eee" stroke="#ccc" stroke-width=".5"/>
 <!-- whatsapp -->
 <circle cx="257.5" cy="17.5" r="6.6" fill="none" stroke="#35c46a" stroke-width="1.5"/>
 <path d="M251.5 24.5l1.3-3.3 2 2z" fill="#35c46a"/>
 <path d="M255 15q0 4 4.5 5l1-1.2-1.4-.9-.8.8q-1.5-.7-2.2-2.2l.8-.8-.9-1.4z" fill="#35c46a"/>
 <!-- folder -->
 <path d="M281 12.5h5l1.5 1.5h7.5v9.7H281z" fill="#f0c63c"/>
 <rect x="281" y="15.5" width="14" height="8.2" fill="#f6d860"/>
 <rect x="284" y="19" width="8" height="4" fill="#5a8fc0"/>
 <!-- acrobat -->
 <rect x="312.5" y="11" width="13.1" height="13.4" rx="2" fill="#c8161d"/>
 <path d="M315 21.5q2-2.5 3.5-7.5q.5 3 5 4.5q-4-.3-8.5 3" stroke="#fff" stroke-width="1.2" fill="none"/>
 <g fill="#8a9aa8"><rect x="215" y="29" width="25" height="1"/><rect x="245" y="29" width="25" height="1"/><rect x="275" y="29" width="25" height="1"/></g>
 <rect x="305" y="28.5" width="28" height="1.5" fill="#9bb3c8"/>
 <!-- tray -->
 <path d="M966 22.5h11q2.5 0 2.5-2.5t-2.5-2.5q-.5-4-4.5-4t-5 3q-3.5 0-3.5 3t2 3z" fill="#d8e4f0"/>
 <circle cx="975.5" cy="13" r="2.6" fill="#e03b3b"/>
 <text x="983.3" y="22" font-size="9.5" fill="#fff" textLength="46.3" lengthAdjust="spacingAndGlyphs">8°C  Cloudy</text>
 <path d="M1045 20.5l4-4 4 4" stroke="#fff" stroke-width="1.1" fill="none"/>
 <rect x="1060.5" y="14" width="6.5" height="7.5" rx="1" stroke="#ddd" stroke-width="1" fill="none"/>
 <path d="M1067 16.5l2-1v4.5l-2-1" stroke="#ddd" stroke-width="1" fill="none"/>
 <path d="M1076 22.5q0-6 6-8M1078.5 22.5q0-3.5 3.5-5M1081 22.5v0" stroke="#bbb" stroke-width="1" fill="none"/>
 <path d="M1088.5 16h2l3-2.5v9l-3-2.5h-2z M1095.5 16q1.2 2 0 4M1097 14.5q2 3.5 0 7" stroke="#ddd" stroke-width="1" fill="none"/>
 <text x="1105" y="21.8" font-size="8.5" fill="#fff" textLength="14.8" lengthAdjust="spacingAndGlyphs">HRV</text>
 <text x="1137.5" y="15.5" font-size="8.5" fill="#fff" textLength="16.3" lengthAdjust="spacingAndGlyphs">14:56</text>
 <text x="1127.5" y="27" font-size="8.5" fill="#fff" textLength="36.5" lengthAdjust="spacingAndGlyphs">24/01/2025</text>
 <path d="M1176 11.5h12v8h-4l-3 2.5v-2.5h-5z" stroke="#fff" stroke-width="1.1" fill="none"/>
 <path d="M1178.5 14.5h7M1178.5 17h7" stroke="#fff" stroke-width="1"/>
 <circle cx="1185" cy="23" r="5" fill="#1f2428" stroke="#fff" stroke-width="0.9"/>
 <text x="1181.3" y="26" font-size="7.5" fill="#fff" textLength="7.5" lengthAdjust="spacingAndGlyphs">26</text>
</svg>
<div id="leftborder" class="a"></div>
</body></html>
